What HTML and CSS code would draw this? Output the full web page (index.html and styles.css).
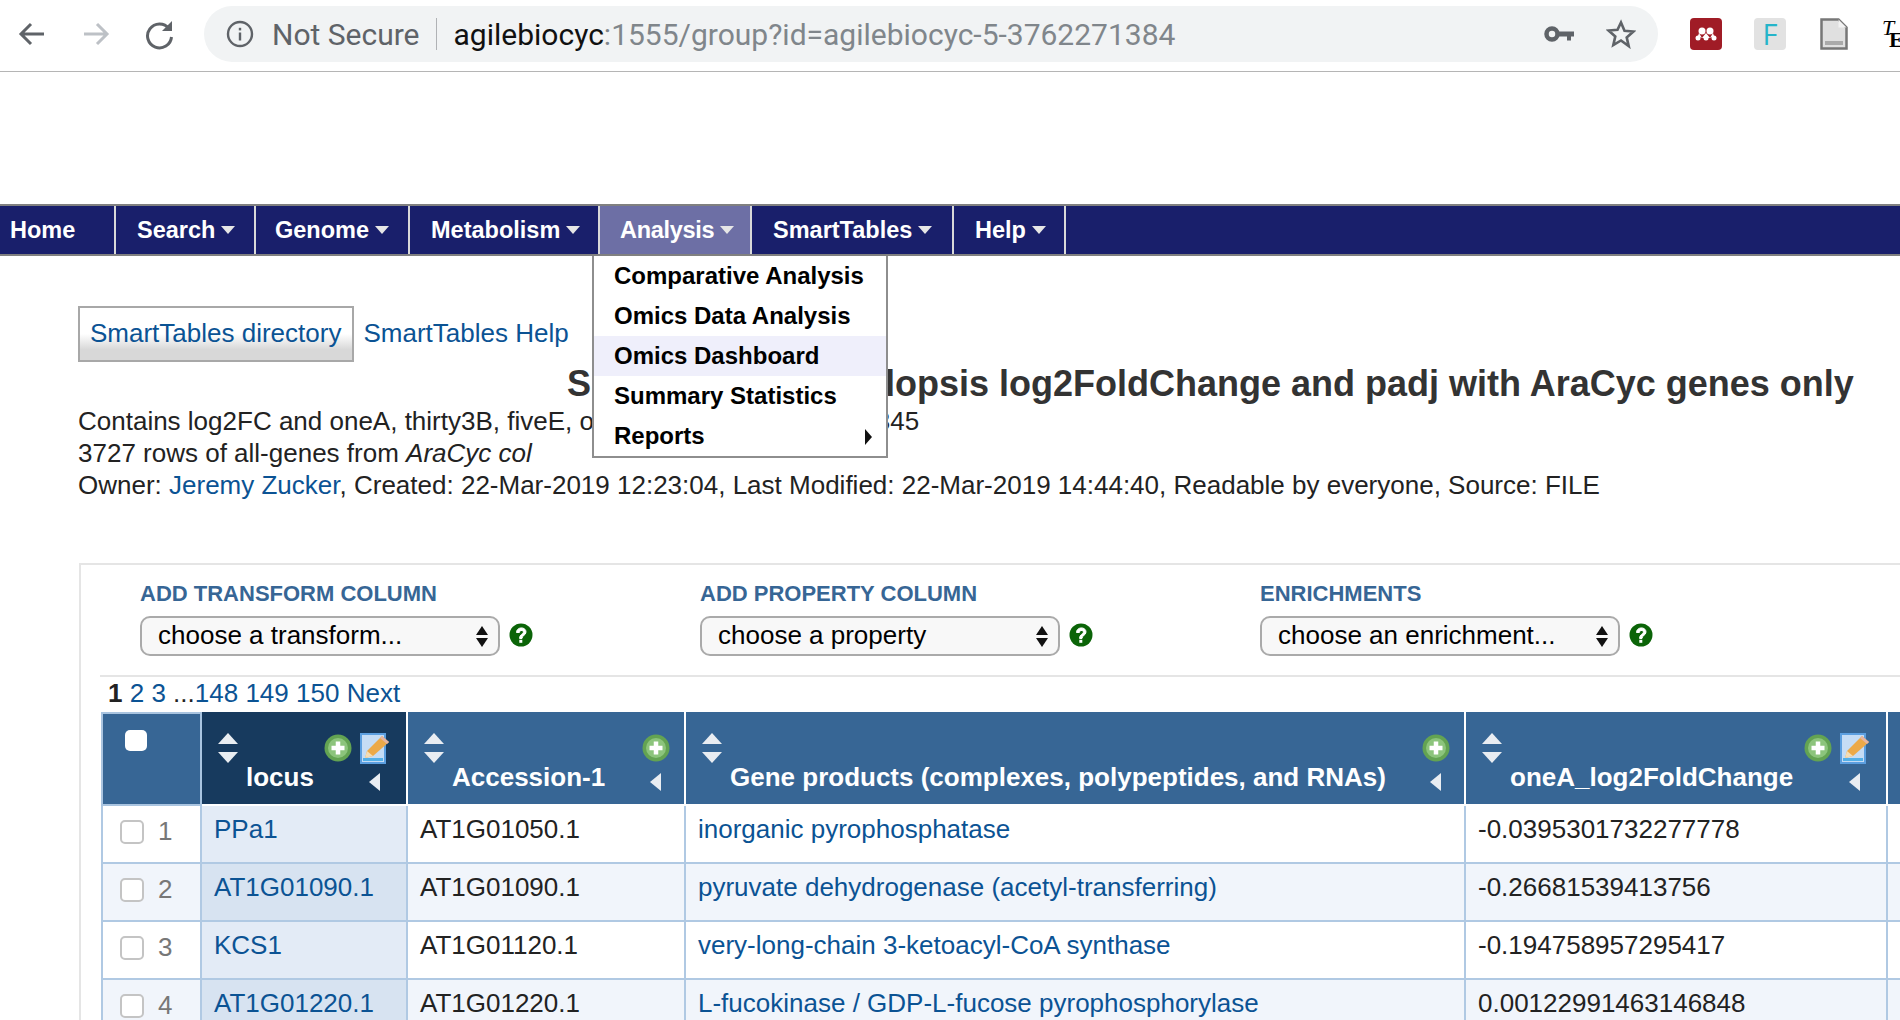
FILE: index.html
```html
<!DOCTYPE html>
<html lang="en">
<head>
    <meta charset="UTF-8">
    <meta name="viewport" content="width=device-width, initial-scale=1.0">
    <title>SmartTable</title>
    <link rel="stylesheet" href="styles.css">
</head>
<body>
    <svg class="sprites" width="0" height="0">
        <symbol id="add" viewBox="0 0 28 28">
            <circle cx="14" cy="14" r="13.5" fill="#63a352"/>
            <circle cx="14" cy="14" r="10" fill="#8cc47c"/>
            <path d="M14 7.500v13M7.500 14h13" stroke="#fff" stroke-width="4.500"/>
        </symbol>
        <symbol id="edit" viewBox="0 0 29 31">
            <rect x="1" y="1" width="24" height="29" fill="#c5dcf5" stroke="#5c9fe0" stroke-width="2"/>
            <rect x="3" y="25" width="20" height="3" fill="#53b0e8"/>
            <path d="M5 25l2-7L22 3l7 6-16 14z" fill="#eca948"/>
            <path d="M5 25l2-7 6 5z" fill="#f3dcb5"/>
            <path d="M22 3l7 6-2 2-7-6z" fill="#e8b5a0"/>
        </symbol>
        <symbol id="help" viewBox="0 0 24 24">
            <circle cx="12" cy="12" r="11.500" fill="#0b6408"/>
            <path d="M7.500 9.500c0-6 9.500-6 9.500-.5 0 3.500-4 3.200-4 6.500h-2.400c0-4.500 3.800-4.200 3.800-6.500 0-2.200-3.900-2.200-4 .5z" fill="#fff" stroke="#fff"/>
            <rect x="10.300" y="16.800" width="3" height="3" fill="#fff"/>
        </symbol>
    </svg>

    <div class="toolbar">
        <svg class="tool-icon" width="32" height="32" viewBox="0 0 32 32"><path d="M28 16H6M15 6L5 16l10 10" fill="none" stroke="#5f6368" stroke-width="3"/></svg>
        <svg class="tool-icon" width="32" height="32" viewBox="0 0 32 32"><path d="M4 16h22M17 6l10 10-10 10" fill="none" stroke="#bdc1c6" stroke-width="3"/></svg>
        <svg class="tool-icon" width="32" height="32" viewBox="0 0 32 32"><path d="M25 10.500A12 12 0 1 0 27.500 19" fill="none" stroke="#5f6368" stroke-width="3"/><path d="M28 3v10H18z" fill="#5f6368"/></svg>
        <div class="omnibox">
            <svg class="info-icon" width="28" height="28" viewBox="0 0 28 28"><circle cx="14" cy="14" r="12" fill="none" stroke="#5f6368" stroke-width="2.400"/><rect x="12.800" y="12.500" width="2.400" height="8" fill="#5f6368"/><rect x="12.800" y="7.800" width="2.400" height="2.600" fill="#5f6368"/></svg>
            <span class="not-secure">Not Secure</span>
            <span class="omni-sep"></span>
            <span class="url"><span class="url-host">agilebiocyc</span>:1555/group?id=agilebiocyc-5-3762271384</span>
            <svg class="key-icon" width="30" height="16" viewBox="0 0 30 16"><circle cx="8" cy="8" r="5.500" fill="none" stroke="#5f6368" stroke-width="4.500"/><path d="M14 5.500h16v5h-3v4h-4v-4h-9z" fill="#5f6368"/></svg>
            <svg class="star-icon" width="30" height="30" viewBox="0 0 30 30"><path d="M15 3.500l3.500 8.200 8.900.8-6.700 5.900 2 8.700L15 21.500l-7.700 4.600 2-8.700-6.700-5.900 8.900-.8z" fill="none" stroke="#5f6368" stroke-width="2.600"/></svg>
        </div>
        <svg class="ext-icon ext-first" width="32" height="32" viewBox="0 0 32 32"><rect width="32" height="32" rx="4" fill="#a01c26"/><g fill="#fff"><circle cx="8" cy="20" r="2.500"/><circle cx="16" cy="20" r="2.500"/><circle cx="24" cy="20" r="2.500"/><circle cx="12" cy="13" r="3.500"/><circle cx="20" cy="13" r="3.500"/><path d="M9 15l3 5 4-5 4 5 3-5 1 3-4 2h-8l-4-2z"/></g></svg>
        <div class="ext-f">F</div>
        <svg class="ext-icon" width="28" height="32" viewBox="0 0 28 32"><path d="M1.500 1.500h17l8 8v21h-25z" fill="#e0e0e0" stroke="#777" stroke-width="2.500"/><path d="M18.500 1.500v8h8z" fill="#f2f2f2"/><rect x="5" y="23" width="18" height="4" fill="#aaa"/></svg>
        <div class="ext-te"><i>T</i><b>E</b></div>
    </div>

    <nav class="nav-bar">
        <a class="nav-item nav-home">Home</a>
        <a class="nav-item nav-search">Search<span class="caret"></span></a>
        <a class="nav-item nav-genome">Genome<span class="caret"></span></a>
        <a class="nav-item nav-metabolism">Metabolism<span class="caret"></span></a>
        <div class="nav-item nav-active">Analysis<span class="caret"></span>
            <ul class="dropdown">
                <li>Comparative Analysis</li>
                <li>Omics Data Analysis</li>
                <li class="hover">Omics Dashboard</li>
                <li>Summary Statistics</li>
                <li>Reports<span class="arrow-right"></span></li>
            </ul>
        </div>
        <a class="nav-item nav-tables">SmartTables<span class="caret"></span></a>
        <a class="nav-item nav-help">Help<span class="caret"></span></a>
    </nav>

    <div class="content">
        <div class="top-links">
            <a class="dir-button">SmartTables directory</a>
            <a class="link">SmartTables Help</a>
        </div>
        <h1 class="table-title">SmartTable: Arabidopsis log2FoldChange and padj with AraCyc genes only</h1>
        <div class="description">
            <div>Contains log2FC and oneA, thirty3B, fiveE, other samples from run 2,345</div>
            <div>3727 rows of all-genes from <i>AraCyc col</i></div>
            <div>Owner: <a class="link">Jeremy Zucker</a>, Created: 22-Mar-2019 12:23:04, Last Modified: 22-Mar-2019 14:44:40, Readable by everyone, Source: FILE</div>
        </div>

        <div class="panel">
            <div class="controls">
                <div class="control">
                    <div class="control-label">ADD TRANSFORM COLUMN</div>
                    <div class="control-row">
                        <div class="select"><span>choose a transform...</span><span class="updown"><i class="tri-up"></i><i class="tri-down"></i></span></div>
                        <svg class="help-icon"><use href="#help"/></svg>
                    </div>
                </div>
                <div class="control">
                    <div class="control-label">ADD PROPERTY COLUMN</div>
                    <div class="control-row">
                        <div class="select"><span>choose a property</span><span class="updown"><i class="tri-up"></i><i class="tri-down"></i></span></div>
                        <svg class="help-icon"><use href="#help"/></svg>
                    </div>
                </div>
                <div class="control">
                    <div class="control-label">ENRICHMENTS</div>
                    <div class="control-row">
                        <div class="select"><span>choose an enrichment...</span><span class="updown"><i class="tri-up"></i><i class="tri-down"></i></span></div>
                        <svg class="help-icon"><use href="#help"/></svg>
                    </div>
                </div>
            </div>

            <div class="pager"><b>1</b> <a class="link">2</a> <a class="link">3</a> ...<a class="link">148</a> <a class="link">149</a> <a class="link">150</a> <a class="link">Next</a></div>

            <table class="smart-table">
                <colgroup>
                    <col class="col-check"><col class="col-locus"><col class="col-acc"><col class="col-gene"><col class="col-fold"><col class="col-next">
                </colgroup>
                <thead>
                    <tr>
                        <th class="th-check"><input type="checkbox" class="head-box"></th>
                        <th class="th-sorted">
                            <div class="th-inner">
                                <div class="sort"><i class="sort-up"></i><i class="sort-down"></i></div>
                                <div class="th-label">locus</div>
                                <div class="th-tools has-edit">
                                    <div class="tool-row"><svg class="icon-add"><use href="#add"/></svg><svg class="icon-edit"><use href="#edit"/></svg></div>
                                    <i class="hide-col"></i>
                                </div>
                            </div>
                        </th>
                        <th>
                            <div class="th-inner">
                                <div class="sort"><i class="sort-up"></i><i class="sort-down"></i></div>
                                <div class="th-label">Accession-1</div>
                                <div class="th-tools">
                                    <div class="tool-row"><svg class="icon-add"><use href="#add"/></svg></div>
                                    <i class="hide-col"></i>
                                </div>
                            </div>
                        </th>
                        <th>
                            <div class="th-inner">
                                <div class="sort"><i class="sort-up"></i><i class="sort-down"></i></div>
                                <div class="th-label">Gene products (complexes, polypeptides, and RNAs)</div>
                                <div class="th-tools">
                                    <div class="tool-row"><svg class="icon-add"><use href="#add"/></svg></div>
                                    <i class="hide-col"></i>
                                </div>
                            </div>
                        </th>
                        <th>
                            <div class="th-inner">
                                <div class="sort"><i class="sort-up"></i><i class="sort-down"></i></div>
                                <div class="th-label">oneA_log2FoldChange</div>
                                <div class="th-tools has-edit">
                                    <div class="tool-row"><svg class="icon-add"><use href="#add"/></svg><svg class="icon-edit"><use href="#edit"/></svg></div>
                                    <i class="hide-col"></i>
                                </div>
                            </div>
                        </th>
                        <th></th>
                    </tr>
                </thead>
                <tbody>
                    <tr>
                        <td class="td-check"><input type="checkbox" class="row-box"><span class="row-num">1</span></td>
                        <td class="td-locus"><a class="link">PPa1</a></td>
                        <td>AT1G01050.1</td>
                        <td><a class="link">inorganic pyrophosphatase</a></td>
                        <td>-0.0395301732277778</td>
                        <td></td>
                    </tr>
                    <tr>
                        <td class="td-check"><input type="checkbox" class="row-box"><span class="row-num">2</span></td>
                        <td class="td-locus"><a class="link">AT1G01090.1</a></td>
                        <td>AT1G01090.1</td>
                        <td><a class="link">pyruvate dehydrogenase (acetyl-transferring)</a></td>
                        <td>-0.26681539413756</td>
                        <td></td>
                    </tr>
                    <tr>
                        <td class="td-check"><input type="checkbox" class="row-box"><span class="row-num">3</span></td>
                        <td class="td-locus"><a class="link">KCS1</a></td>
                        <td>AT1G01120.1</td>
                        <td><a class="link">very-long-chain 3-ketoacyl-CoA synthase</a></td>
                        <td>-0.194758957295417</td>
                        <td></td>
                    </tr>
                    <tr>
                        <td class="td-check"><input type="checkbox" class="row-box"><span class="row-num">4</span></td>
                        <td class="td-locus"><a class="link">AT1G01220.1</a></td>
                        <td>AT1G01220.1</td>
                        <td><a class="link">L-fucokinase / GDP-L-fucose pyrophosphorylase</a></td>
                        <td>0.00122991463146848</td>
                        <td></td>
                    </tr>
                </tbody>
            </table>
        </div>
    </div>
</body>
</html>
```

FILE: styles.css
```css
html, body {
    height: 100%;
}

body {
    margin: 0;
    overflow: hidden;
    background: #fff;
    color: #222;
    font-family: "Liberation Sans", Arial, sans-serif;
    font-size: 26px;
}

.sprites {
    display: block;
    height: 0;
}

.link {
    color: #0b5394;
}

/* browser toolbar */
.toolbar {
    display: flex;
    align-items: center;
    height: 68px;
    padding: 0 0 3px 16px;
    border-bottom: 1px solid #b5b5b5;
}

.tool-icon {
    margin-right: 32px;
    flex: none;
}

.omnibox {
    display: flex;
    align-items: center;
    width: 1454px;
    height: 56px;
    margin-left: -4px;
    background: #f1f3f4;
    border-radius: 28px;
    flex: none;
}

.info-icon {
    margin-left: 22px;
}

.not-secure {
    margin-left: 18px;
    color: #5f6368;
    font-family: Roboto, sans-serif;
    font-size: 30px;
}

.omni-sep {
    width: 1px;
    height: 32px;
    margin: 0 17px 0 16px;
    background: #b0b2b5;
}

.url {
    flex: 1;
    color: #80868b;
    font-family: Roboto, sans-serif;
    font-size: 30px;
}

.url-host {
    color: #111;
}

.key-icon {
    margin-right: 32px;
}

.star-icon {
    margin-right: 22px;
}

.ext-icon {
    flex: none;
}

.ext-first {
    margin-left: 32px;
}

.ext-f {
    width: 32px;
    height: 32px;
    margin: 0 34px 0 32px;
    flex: none;
    background: #e2e2e2;
    border-radius: 4px;
    color: #25b4c9;
    font-family: "Open Sans", sans-serif;
    font-size: 29px;
    line-height: 32px;
    text-align: center;
}

.ext-te {
    display: flex;
    flex-direction: column;
    margin-left: 34px;
    flex: none;
    color: #000;
    font-family: "Liberation Serif", serif;
    font-size: 22px;
    line-height: 16px;
}

.ext-te b {
    margin: -4px 0 0 7px;
}

/* site menu */
.nav-bar {
    display: flex;
    height: 48px;
    margin-top: 132px;
    background: #191f6b;
    border-top: 2px solid #808080;
    border-bottom: 2px solid #808080;
}

.nav-item {
    position: relative;
    display: flex;
    align-items: center;
    box-sizing: border-box;
    padding-left: 21px;
    border-right: 2px solid #d8d8d8;
    color: #fff;
    font-size: 23.500px;
    font-weight: bold;
}

.nav-home {
    width: 116px;
    padding-left: 10px;
}

.nav-search { width: 140px; }
.nav-genome { width: 154px; padding-left: 19px; }
.nav-metabolism { width: 190px; }
.nav-active { width: 152px; padding-left: 20px; letter-spacing: -0.300px; }
.nav-tables { width: 202px; }
.nav-help { width: 112px; }

.nav-active {
    background: #6d6fa5;
}

.caret {
    width: 0;
    height: 0;
    margin-left: 6px;
    border-top: 8px solid #e6e6e6;
    border-left: 7px solid transparent;
    border-right: 7px solid transparent;
}

.dropdown {
    position: absolute;
    top: 50px;
    left: -8px;
    z-index: 5;
    width: 292px;
    margin: 0;
    padding: 0;
    list-style: none;
    background: #fff;
    border: 2px solid #8e8e8e;
    border-top: none;
    color: #000;
    font-size: 24px;
    letter-spacing: 0;
}

.dropdown li {
    position: relative;
    height: 40px;
    padding-left: 20px;
    line-height: 40px;
}

.dropdown li.hover {
    background: #efeffb;
}

.arrow-right {
    position: absolute;
    top: 13px;
    right: 14px;
    border-left: 7px solid #111;
    border-top: 8px solid transparent;
    border-bottom: 8px solid transparent;
}

/* page body */
.content {
    padding-left: 78px;
}

.top-links {
    display: flex;
    align-items: center;
    height: 56px;
    margin-top: 50px;
}

.dir-button {
    display: flex;
    align-items: center;
    height: 50px;
    padding: 0 11px 2px 10px;
    border: 2px solid #a8a8a8;
    background: linear-gradient(#fff 50%, #d8d8d8 80%);
    color: #0b5394;
}

.top-links .link {
    margin: -2px 0 0 9px;
}

.table-title {
    height: 43px;
    margin: 0 0 0 489px;
    color: #333;
    font-size: 36px;
    line-height: 44px;
    white-space: nowrap;
}

.description {
    line-height: 32px;
    white-space: nowrap;
}

.panel {
    margin: 62px 0 0 1px;
    border-top: 2px solid #e5e5e5;
    border-left: 2px solid #e5e5e5;
}

.controls {
    display: flex;
    height: 110px;
    margin-left: 19px;
    padding-left: 40px;
    border-bottom: 2px solid #e5e5e5;
}

.control {
    width: 560px;
    flex: none;
}

.control-label {
    height: 34px;
    margin-top: 12px;
    color: #376695;
    font-size: 22px;
    font-weight: bold;
    line-height: 34px;
}

.control-row {
    display: flex;
    align-items: center;
    margin-top: 5px;
}

.select {
    display: flex;
    align-items: center;
    justify-content: space-between;
    box-sizing: border-box;
    width: 360px;
    height: 40px;
    padding: 0 10px 2px 16px;
    background: #f8f8f8;
    border: 2px solid #aaa;
    border-radius: 10px;
    color: #000;
}

.updown {
    display: flex;
    flex-direction: column;
    gap: 3px;
    margin-top: 2px;
}

.tri-up,
.tri-down {
    display: block;
    border-left: 6px solid transparent;
    border-right: 6px solid transparent;
}

.tri-up {
    border-bottom: 9px solid #111;
}

.tri-down {
    border-top: 9px solid #111;
}

.help-icon {
    width: 24px;
    height: 24px;
    margin: -2px 0 0 9px;
}

.pager {
    height: 35px;
    margin-left: 27px;
    line-height: 32px;
}

.pager b {
    color: #222;
}

/* results table */
.smart-table {
    width: 1887px;
    margin-left: 20px;
    table-layout: fixed;
    border-collapse: separate;
    border-spacing: 0;
}

.col-check { width: 101px; }
.col-locus { width: 206px; }
.col-acc { width: 278px; }
.col-gene { width: 780px; }
.col-fold { width: 422px; }
.col-next { width: 100px; }

.smart-table th {
    padding: 0;
    background: #376695;
    border-right: 2px solid #fff;
    border-bottom: 2px solid #fff;
    color: #fff;
    text-align: left;
    vertical-align: top;
}

.smart-table th.th-check {
    border-left: 2px solid #a9c4e0;
    border-top: 2px solid #a9c4e0;
    border-right: 2px solid #a9c4e0;
    border-bottom: 2px solid #a9c4e0;
}

.smart-table th.th-sorted {
    background: #173a5e;
}

.head-box {
    appearance: none;
    display: block;
    width: 22px;
    height: 21px;
    margin: 16px 0 0 22px;
    background: #fff;
    border-radius: 5px;
}

.th-inner {
    display: flex;
    box-sizing: border-box;
    height: 92px;
    padding: 21px 14px 12px 16px;
}

.sort {
    width: 20px;
    margin-right: 8px;
    flex: none;
}

.sort-up,
.sort-down {
    display: block;
    border-left: 10px solid transparent;
    border-right: 10px solid transparent;
}

.sort-up {
    border-bottom: 11px solid #e9edf2;
}

.sort-down {
    margin-top: 8px;
    border-top: 11px solid #e9edf2;
}

.th-label {
    flex: 1;
    align-self: flex-end;
    font-size: 26px;
    line-height: 30px;
    white-space: nowrap;
}

.th-tools {
    display: flex;
    flex-direction: column;
    align-items: flex-end;
    flex: none;
}

.th-tools.has-edit {
    margin-right: 3px;
}

.tool-row {
    display: flex;
    gap: 8px;
    height: 31px;
}

.icon-add {
    width: 28px;
    height: 28px;
    margin-top: 1px;
}

.icon-edit {
    width: 29px;
    height: 31px;
}

.hide-col {
    display: block;
    margin: 9px 9px 0 0;
    border-right: 11px solid #e9edf2;
    border-top: 9px solid transparent;
    border-bottom: 9px solid transparent;
}

.smart-table td {
    box-sizing: border-box;
    height: 58px;
    padding: 7px 12px 0;
    border-right: 2px solid #b0c9e3;
    border-bottom: 2px solid #b0c9e3;
    line-height: 32px;
    vertical-align: top;
    white-space: nowrap;
}

.smart-table tbody tr:nth-child(even) td {
    background: #f1f5fb;
}

.smart-table td.td-locus {
    background: #e3ebf6;
}

.smart-table tbody tr:nth-child(even) td.td-locus {
    background: #d7e3f1;
}

.smart-table td.td-check {
    padding-left: 17px;
    border-left: 2px solid #b0c9e3;
}

.row-box {
    appearance: none;
    box-sizing: border-box;
    width: 24px;
    height: 24px;
    margin: 7px 0 0;
    vertical-align: top;
    background: #fff;
    border: 2px solid #c4c4c4;
    border-radius: 5px;
}

.row-num {
    display: inline-block;
    margin: 2px 0 0 14px;
    color: #777;
}
```
